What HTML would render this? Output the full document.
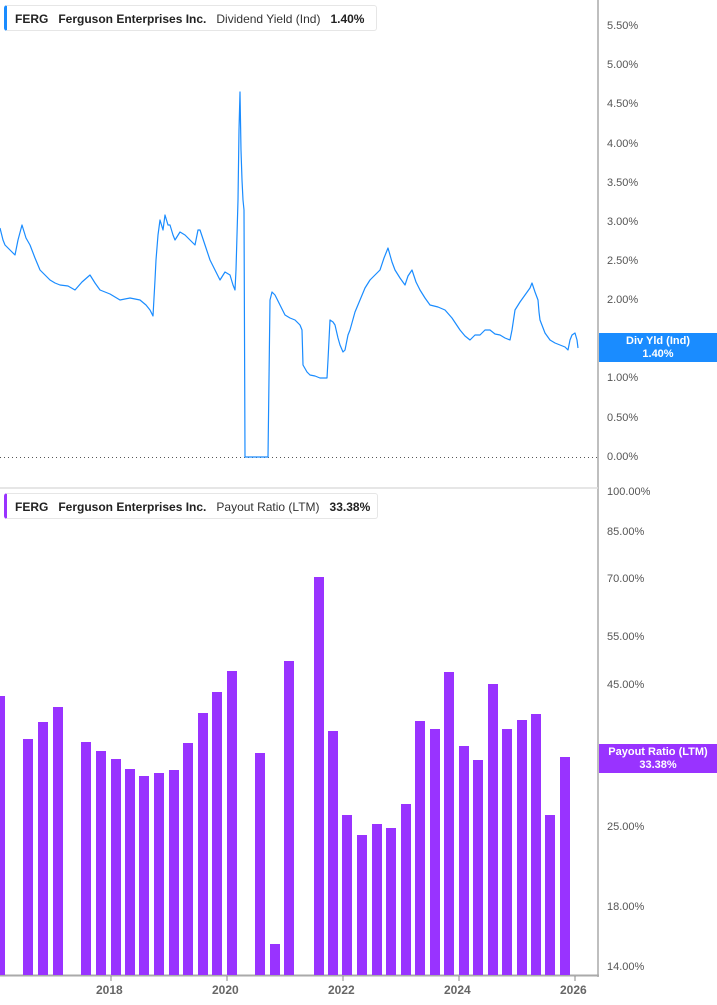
<!DOCTYPE html>
<html><head><meta charset="utf-8"><style>
body{margin:0;width:717px;height:1005px;background:#fff;font-family:"Liberation Sans",sans-serif;overflow:hidden;position:relative}
.leg{position:absolute;left:4px;height:26px;border:1px solid #e6e6e6;border-left:3px solid #1a8cff;border-radius:3px;background:#fff;font-size:12px;font-weight:bold;color:#222;line-height:26px;padding-left:8px;box-sizing:border-box;white-space:nowrap}
.leg span{margin-right:10px}
.leg .n{font-weight:normal;color:#333}
.ax{position:absolute;left:607px;font-size:11px;color:#555}
.xl{position:absolute;top:983px;font-size:12px;font-weight:bold;color:#666}
.tag{position:absolute;left:599px;width:118px;color:#fff;font-size:11px;font-weight:bold;text-align:center;line-height:13px}
</style></head><body>
<svg width="717" height="1005" style="position:absolute;left:0;top:0">
<line x1="598" y1="0" x2="598" y2="977" stroke="#aaa" stroke-width="1.5"/>
<line x1="0" y1="488" x2="598" y2="488" stroke="#ddd" stroke-width="1.5"/>
<line x1="0" y1="975.5" x2="599" y2="975.5" stroke="#aaa" stroke-width="2"/>
<line x1="0" y1="457.5" x2="598" y2="457.5" stroke="#555" stroke-width="1" stroke-dasharray="1,3"/>
<g stroke="#888">
<line x1="111" y1="976" x2="111" y2="981"/><line x1="227" y1="976" x2="227" y2="981"/><line x1="343" y1="976" x2="343" y2="981"/><line x1="459" y1="976" x2="459" y2="981"/><line x1="575" y1="976" x2="575" y2="981"/>
</g>
<polyline fill="none" stroke="#1a8cff" stroke-width="1.2" stroke-linejoin="round" points="0,228 3,240 5,245 10,250 15,255 18,240 22,225 26,238 30,245 35,258 40,270 45,275 50,280 55,283 60,285 68,286 75,290 82,282 90,275 95,283 100,290 110,294 120,300 130,298 140,300 146,305 150,310 153,316 155,280 156,260 158,235 160,220 163,230 165,215 168,225 170,225 173,235 175,240 180,232 185,235 190,240 195,245 198,230 200,230 205,245 210,260 215,270 220,280 225,272 230,275 233,285 235,290 236,270 238,200 239,130 240,92 241,150 242,180 243,200 244,210 245,457 268,457 270,300 272,292 275,295 280,305 285,315 290,318 295,320 300,325 302,330 303,365 307,372 310,375 315,376 320,378 327,378 328,360 330,320 333,322 335,325 338,338 340,345 343,352 345,350 348,335 350,330 355,312 360,300 365,288 370,280 375,275 380,270 384,258 388,248 392,262 395,270 400,278 405,285 408,276 412,270 416,282 420,290 425,298 430,305 438,307 445,310 452,318 460,330 465,336 470,340 475,335 480,335 485,330 490,330 495,334 500,335 505,338 510,340 512,330 515,310 520,302 525,295 530,288 532,283 535,292 538,300 539,312 540,320 545,333 550,340 555,343 560,345 565,347 568,350 570,340 572,335 575,333 577,340 578,348"/>
<g fill="#9933ff">
<rect x="0" y="696" width="5" height="279"/>
<rect x="23" y="739" width="10" height="236"/>
<rect x="38" y="722" width="10" height="253"/>
<rect x="53" y="707" width="10" height="268"/>
<rect x="81" y="742" width="10" height="233"/>
<rect x="96" y="751" width="10" height="224"/>
<rect x="111" y="759" width="10" height="216"/>
<rect x="125" y="769" width="10" height="206"/>
<rect x="139" y="776" width="10" height="199"/>
<rect x="154" y="773" width="10" height="202"/>
<rect x="169" y="770" width="10" height="205"/>
<rect x="183" y="743" width="10" height="232"/>
<rect x="198" y="713" width="10" height="262"/>
<rect x="212" y="692" width="10" height="283"/>
<rect x="227" y="671" width="10" height="304"/>
<rect x="255" y="753" width="10" height="222"/>
<rect x="270" y="944" width="10" height="31"/>
<rect x="284" y="661" width="10" height="314"/>
<rect x="314" y="577" width="10" height="398"/>
<rect x="328" y="731" width="10" height="244"/>
<rect x="342" y="815" width="10" height="160"/>
<rect x="357" y="835" width="10" height="140"/>
<rect x="372" y="824" width="10" height="151"/>
<rect x="386" y="828" width="10" height="147"/>
<rect x="401" y="804" width="10" height="171"/>
<rect x="415" y="721" width="10" height="254"/>
<rect x="430" y="729" width="10" height="246"/>
<rect x="444" y="672" width="10" height="303"/>
<rect x="459" y="746" width="10" height="229"/>
<rect x="473" y="760" width="10" height="215"/>
<rect x="488" y="684" width="10" height="291"/>
<rect x="502" y="729" width="10" height="246"/>
<rect x="517" y="720" width="10" height="255"/>
<rect x="531" y="714" width="10" height="261"/>
<rect x="545" y="815" width="10" height="160"/>
<rect x="560" y="757" width="10" height="218"/>
</g>
</svg>
<div class="leg" style="top:5px;width:373px"><span>FERG</span><span>Ferguson Enterprises Inc.</span><span class="n">Dividend Yield (Ind)</span><span>1.40%</span></div>
<div class="leg" style="top:493px;width:374px;border-left-color:#9933ff"><span>FERG</span><span>Ferguson Enterprises Inc.</span><span class="n">Payout Ratio (LTM)</span><span>33.38%</span></div>
<div class="ax" style="top:20px">5.50%</div><div class="ax" style="top:59px">5.00%</div><div class="ax" style="top:98px">4.50%</div><div class="ax" style="top:138px">4.00%</div><div class="ax" style="top:177px">3.50%</div><div class="ax" style="top:216px">3.00%</div><div class="ax" style="top:255px">2.50%</div><div class="ax" style="top:294px">2.00%</div><div class="ax" style="top:372px">1.00%</div><div class="ax" style="top:412px">0.50%</div><div class="ax" style="top:451px">0.00%</div>
<div class="ax" style="top:486px">100.00%</div><div class="ax" style="top:526px">85.00%</div><div class="ax" style="top:573px">70.00%</div><div class="ax" style="top:631px">55.00%</div><div class="ax" style="top:679px">45.00%</div><div class="ax" style="top:821px">25.00%</div><div class="ax" style="top:901px">18.00%</div><div class="ax" style="top:961px">14.00%</div>
<div class="tag" style="top:333px;height:29px;background:#1a8cff;padding-top:2px;box-sizing:border-box">Div Yld (Ind)<br>1.40%</div>
<div class="tag" style="top:744px;height:29px;background:#9933ff;padding-top:2px;box-sizing:border-box">Payout Ratio (LTM)<br>33.38%</div>
<div class="xl" style="left:96px">2018</div><div class="xl" style="left:212px">2020</div><div class="xl" style="left:328px">2022</div><div class="xl" style="left:444px">2024</div><div class="xl" style="left:560px">2026</div>
</body></html>
